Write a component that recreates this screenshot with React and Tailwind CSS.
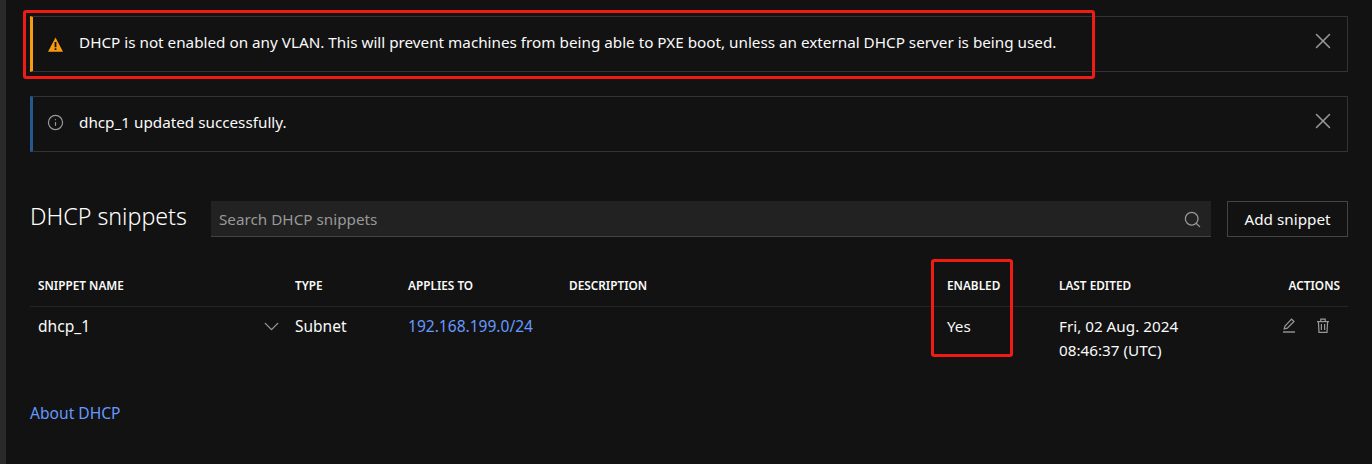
import { ChevronDown, Info, Search, X } from 'lucide-react'

const HEADERS = [
  { label: 'Snippet name', className: 'pl-2' },
  { label: 'Type', className: 'pl-2' },
  { label: 'Applies to', className: 'pl-2' },
  { label: 'Description', className: 'pl-2' },
  { label: 'Enabled', className: 'pl-2' },
  { label: 'Last edited', className: 'pl-2' },
  { label: 'Actions', className: 'pr-2 text-right' },
]

const COLUMNS = 'grid grid-cols-[257px_113px_161px_378px_112px_1fr_88px]'

function Notification({ accent, icon, text }) {
  return (
    <div className={`flex h-[56px] items-center justify-between border border-l-[3px] border-[#333333] ${accent} pl-[15px] pr-[11px]`}>
      <div className="flex items-center gap-[15px]">
        <span className="flex h-[16px] w-[16px] items-center justify-center">{icon}</span>
        <p className="pb-[3px] text-[#fafafa]">{text}</p>
      </div>
      <X size={26} strokeWidth={1.4} className="mb-[6px] text-[#999999]" />
    </div>
  )
}

function WarningIcon() {
  return (
    <svg width="15" height="15" viewBox="0 0 15 15" className="-ml-[1px] shrink-0">
      <path d="M7.5.5 15 14.8H0z" fill="#f99b11" />
      <path d="M6.6 5h1.8v5.2H6.6zM6.6 11.2h1.8V13H6.6z" fill="#121212" />
    </svg>
  )
}

function PencilLine() {
  return (
    <svg width="14" height="15" viewBox="0 0 14 15" fill="none" stroke="#999999" strokeWidth="1.2">
      <path d="M2.2 11 3 8 9.6 1.2l2.4 2.3L5.3 10.2z" />
      <path d="M1 14h12" strokeWidth="1.4" />
    </svg>
  )
}

function TrashIcon() {
  return (
    <svg width="14" height="16" viewBox="0 0 14 16" fill="none" stroke="#999999" strokeWidth="1.2">
      <path d="M1 3.6h12" />
      <path d="M4.8 3.4V1.2h4.4v2.2" />
      <path d="M2.4 3.6 3 14.4h8l.6-10.8" />
      <path d="M5.4 6v6M8.6 6v6" />
    </svg>
  )
}

export default function App() {
  return (
    <div className="flex h-[464px] w-[1372px] overflow-hidden bg-[#121212] font-['Noto_Sans',sans-serif] text-[15.25px] text-[#fafafa]">
      <div className="w-[6px] shrink-0 bg-[#2a2a2a]" />

      <main className="relative flex-1 pl-[24px] pr-[24px] pt-[16px]">
        <div className="flex flex-col gap-[24px]">
          <Notification
            accent="border-l-[#f99b11]"
            icon={<WarningIcon />}
            text="DHCP is not enabled on any VLAN. This will prevent machines from being able to PXE boot, unless an external DHCP server is being used."
          />
          <Notification
            accent="border-l-[#24598f]"
            icon={<Info size={17} strokeWidth={1.7} className="-ml-[1px] mb-[3px] shrink-0 text-[#999999]" />}
            text="dhcp_1 updated successfully."
          />
        </div>

        <div className="mt-[49px] flex items-center gap-[24px]">
          <h1 className="w-[157px] whitespace-nowrap pb-[4px] text-[23.2px] font-light leading-none text-white">DHCP snippets</h1>
          <div className="flex h-[36px] flex-1 items-center justify-between border-b border-[#444444] bg-[#222222] pl-[8px] pr-[9px]">
            <span className="pt-[1px] text-[#999999]">Search DHCP snippets</span>
            <Search size={19} strokeWidth={1.6} className="mt-[1px] text-[#999999]" />
          </div>
          <button className="-ml-[8px] h-[36px] w-[121px] border border-[#444444] text-[#fafafa]">Add snippet</button>
        </div>

        <div className={`${COLUMNS} mt-[38px] h-[32px] border-b border-[#252525] text-[11.8px] font-semibold uppercase leading-[20px]`}>
          {HEADERS.map((header) => (
            <div key={header.label} className={header.className}>{header.label}</div>
          ))}
        </div>

        <div className={`${COLUMNS} pt-[7px] leading-[24px]`}>
          <div className="flex h-[24px] items-center justify-between pl-2 pr-[3px] text-[15.6px]">
            <span>dhcp_1</span>
            <ChevronDown size={25} strokeWidth={1.3} className="text-[#999999]" />
          </div>
          <div className="pl-2 text-[15.5px]">Subnet</div>
          <div className="pl-2 text-[15.55px] text-[#6699ff]">192.168.199.0/24</div>
          <div />
          <div className="pl-2">Yes</div>
          <div className="pl-2">
            <div>Fri, 02 Aug. 2024</div>
            <div>08:46:37 (UTC)</div>
          </div>
          <div className="flex items-start justify-end gap-[20px] pr-[18px] pt-[4px]">
            <PencilLine />
            <TrashIcon />
          </div>
        </div>

        <a className="mt-[40px] block text-[15.6px] text-[#6699ff]">About DHCP</a>

        <div className="absolute left-[17px] top-[10px] h-[69px] w-[1072px] rounded-[3px] border-[3px] border-[#ee1c14]" />
        <div className="absolute left-[925px] top-[259px] h-[98px] w-[82px] rounded-[3px] border-[3px] border-[#ee1c14]" />
      </main>
    </div>
  )
}
